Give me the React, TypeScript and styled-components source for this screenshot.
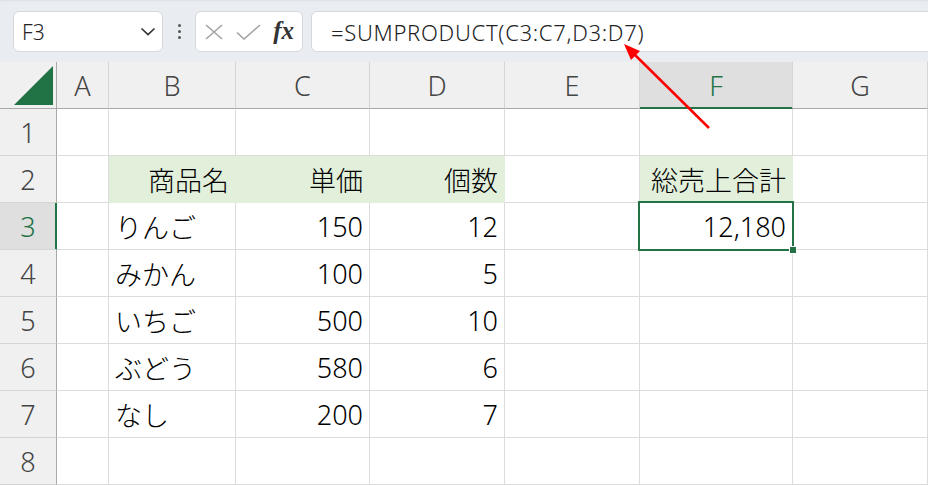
import React from "react";
import styled, { createGlobalStyle, css } from "styled-components";

const GREEN = "#217346";
const GRID = "#dcdcdc";
const HEAD_BG = "#f0f0f0";
const HEAD_SEL = "#dfdfdf";
const HEAD_LINE = "#d4d4d4";
const HEAD_EDGE = "#a9a9a9";
const FILL = "#e2efda";
const FONT = `"Noto Sans", "Noto Sans CJK JP", sans-serif`;

const GlobalStyle = createGlobalStyle`
  html, body { margin: 0; padding: 0; background: #fff; }
  body { font-family: ${FONT}; overflow: hidden; }
  * { box-sizing: border-box; }
`;

const Page = styled.div`
  position: relative;
  width: 928px;
  height: 485px;
  overflow: hidden;
  background: #fff;
`;

const Toolbar = styled.div`
  display: flex;
  align-items: stretch;
  height: 62px;
  padding: 11px 0 10px 13px;
  background: #e9edf1;
  box-shadow: inset 0 2px 2px -1px rgba(0, 0, 0, 0.05);
`;

const Box = styled.div`
  display: flex;
  align-items: center;
  background: #fff;
  border: 1px solid #d5d8dc;
  border-radius: 6px;
`;

const NameBox = styled(Box)`
  width: 150px;
  justify-content: space-between;
  padding: 0 6px 0 8px;
  font-size: 21px;
  font-weight: 300;
  color: #222;
`;

const Grip = styled.div`
  width: 32px;
  display: flex;
  flex-direction: column;
  align-items: center;
  justify-content: center;
  gap: 3px;
`;

const Dot = styled.span`
  width: 3px;
  height: 3px;
  border-radius: 50%;
  background: #555;
`;

const FxBox = styled(Box)`
  width: 108px;
  justify-content: space-between;
  padding: 0 8px 0 9px;
`;

const FxText = styled.span`
  font-family: "Liberation Serif", serif;
  font-style: italic;
  font-weight: bold;
  font-size: 25px;
  color: #333;
  line-height: 1;
  margin-top: -2px;
`;

const FormulaBox = styled(Box)`
  flex: 1;
  margin-left: 8px;
  margin-right: -20px;
  padding-left: 19px;
  font-size: 22px;
  font-weight: 300;
  letter-spacing: 0.7px;
  color: #222;
`;

const Sheet = styled.div`
  display: grid;
  grid-template-columns: 57px 52px 127px 134px 135px 135px 153px 1fr;
  grid-auto-rows: 47px;
`;

const HeaderBase = css`
  display: flex;
  align-items: center;
  justify-content: center;
  font-size: 27px;
  font-weight: 300;
  color: #444;
  background: ${HEAD_BG};
`;

const Corner = styled.div`
  ${HeaderBase};
  align-items: flex-end;
  justify-content: flex-end;
  padding: 0 3px 3px 0;
  border-right: 1px solid ${HEAD_EDGE};
  border-bottom: 1px solid ${HEAD_EDGE};
`;

const Triangle = styled.div`
  width: 39px;
  height: 39px;
  background: ${GREEN};
  clip-path: polygon(100% 0, 100% 100%, 0 100%);
`;

const ColHeader = styled.div<{ $selected?: boolean }>`
  ${HeaderBase};
  border-right: 1px solid ${HEAD_LINE};
  border-bottom: 1px solid ${HEAD_EDGE};
  ${(p) =>
    p.$selected &&
    css`
      background: ${HEAD_SEL};
      color: ${GREEN};
      border-bottom-color: ${GREEN};
      box-shadow: inset 0 -1px 0 ${GREEN};
    `}
`;

const RowHeader = styled.div<{ $selected?: boolean }>`
  ${HeaderBase};
  border-right: 1px solid ${HEAD_EDGE};
  border-bottom: 1px solid ${HEAD_LINE};
  ${(p) =>
    p.$selected &&
    css`
      background: ${HEAD_SEL};
      color: ${GREEN};
      border-right-color: ${GREEN};
      box-shadow: inset -1px 0 0 ${GREEN};
    `}
`;

const Cell = styled.div<{ $align?: "left" | "right"; $fill?: boolean; $selected?: boolean }>`
  position: relative;
  display: flex;
  align-items: center;
  justify-content: ${(p) => (p.$align === "right" ? "flex-end" : "flex-start")};
  padding: 0 6px;
  font-size: 27px;
  font-weight: 300;
  color: #000;
  white-space: nowrap;
  background: ${(p) => (p.$fill ? FILL : "#fff")};
  border-right: 1px solid ${(p) => (p.$fill ? FILL : GRID)};
  border-bottom: 1px solid ${(p) => (p.$fill ? FILL : GRID)};
  ${(p) =>
    p.$selected &&
    css`
      z-index: 2;
      &::after {
        content: "";
        position: absolute;
        inset: -2px;
        border: 2px solid ${GREEN};
        pointer-events: none;
      }
    `}
`;

const FillHandle = styled.span`
  position: absolute;
  right: -5px;
  bottom: -5px;
  width: 8px;
  height: 8px;
  background: ${GREEN};
  border: 1px solid #fff;
  z-index: 3;
`;

const Overlay = styled.svg`
  position: absolute;
  left: 0;
  top: 0;
  pointer-events: none;
  z-index: 10;
`;

type CellData = { text?: string; align?: "left" | "right"; fill?: boolean; selected?: boolean };

const cols = ["A", "B", "C", "D", "E", "F", "G"];

const L = (text: string): CellData => ({ text, align: "left" });
const R = (text: string): CellData => ({ text, align: "right" });
const H = (text: string): CellData => ({ text, align: "right", fill: true });
const E: CellData = {};

const rows: CellData[][] = [
  [E, E, E, E, E, E, E],
  [E, H("商品名"), H("単価"), H("個数"), E, H("総売上合計"), E],
  [E, L("りんご"), R("150"), R("12"), E, { text: "12,180", align: "right", selected: true }, E],
  [E, L("みかん"), R("100"), R("5"), E, E, E],
  [E, L("いちご"), R("500"), R("10"), E, E, E],
  [E, L("ぶどう"), R("580"), R("6"), E, E, E],
  [E, L("なし"), R("200"), R("7"), E, E, E],
  [E, E, E, E, E, E, E],
];

export default function App() {
  return (
    <>
      <GlobalStyle />
      <Page>
        <Toolbar>
          <NameBox>
            <span>F3</span>
            <svg width="16" height="9" viewBox="0 0 16 9">
              <polyline points="1.5,1.5 8,7.5 14.5,1.5" fill="none" stroke="#333" strokeWidth="1.7" />
            </svg>
          </NameBox>
          <Grip>
            <Dot />
            <Dot />
            <Dot />
          </Grip>
          <FxBox>
            <svg width="18" height="16" viewBox="0 0 18 16">
              <path d="M1 1 L17 15 M17 1 L1 15" stroke="#a3a3a3" strokeWidth="1.6" fill="none" />
            </svg>
            <svg width="25" height="16" viewBox="0 0 25 16">
              <polyline points="1,8.5 8,15 24,1" stroke="#a3a3a3" strokeWidth="1.6" fill="none" />
            </svg>
            <FxText>fx</FxText>
          </FxBox>
          <FormulaBox>=SUMPRODUCT(C3:C7,D3:D7)</FormulaBox>
        </Toolbar>
        <Sheet>
          <Corner>
            <Triangle />
          </Corner>
          {cols.map((c) => (
            <ColHeader key={c} $selected={c === "F"}>
              {c}
            </ColHeader>
          ))}
          {rows.map((row, ri) => (
            <React.Fragment key={ri}>
              <RowHeader $selected={ri === 2}>{ri + 1}</RowHeader>
              {row.map((cell, ci) => (
                <Cell key={ci} $align={cell.align} $fill={cell.fill} $selected={cell.selected}>
                  {cell.text}
                  {cell.selected && <FillHandle />}
                </Cell>
              ))}
            </React.Fragment>
          ))}
        </Sheet>
        <Overlay width="928" height="485" viewBox="0 0 928 485">
          <line x1="709" y1="128" x2="633" y2="53" stroke="#ff0000" strokeWidth="2.5" />
          <polygon points="624,44 640,51 631,60" fill="#ff0000" />
        </Overlay>
      </Page>
    </>
  );
}
